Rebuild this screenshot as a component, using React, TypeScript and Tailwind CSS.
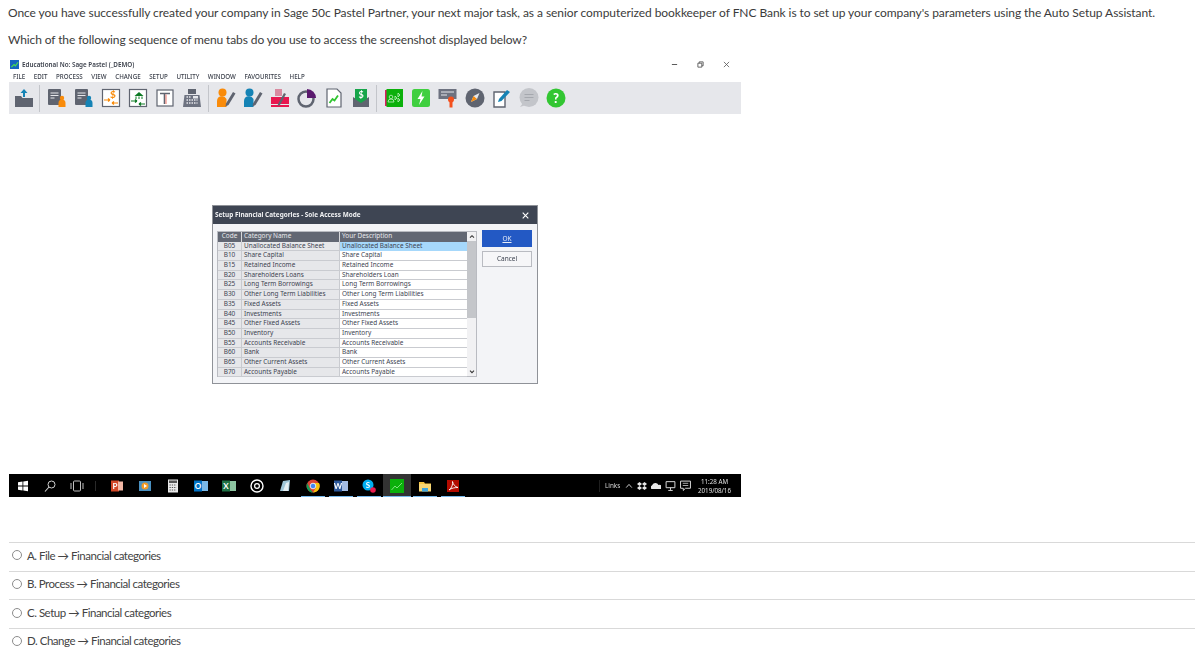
const rows = [
  ['B05', 'Unallocated Balance Sheet', 'Unallocated Balance Sheet'],
  ['B10', 'Share Capital', 'Share Capital'],
  ['B15', 'Retained Income', 'Retained Income'],
  ['B20', 'Shareholders Loans', 'Shareholders Loan'],
  ['B25', 'Long Term Borrowings', 'Long Term Borrowings'],
  ['B30', 'Other Long Term Liabilities', 'Other Long Term Liabilities'],
  ['B35', 'Fixed Assets', 'Fixed Assets'],
  ['B40', 'Investments', 'Investments'],
  ['B45', 'Other Fixed Assets', 'Other Fixed Assets'],
  ['B50', 'Inventory', 'Inventory'],
  ['B55', 'Accounts Receivable', 'Accounts Receivable'],
  ['B60', 'Bank', 'Bank'],
  ['B65', 'Other Current Assets', 'Other Current Assets'],
  ['B70', 'Accounts Payable', 'Accounts Payable'],
];

const menus = ['FILE', 'EDIT', 'PROCESS', 'VIEW', 'CHANGE', 'SETUP', 'UTILITY', 'WINDOW', 'FAVOURITES', 'HELP'];

const options = ['A. File', 'B. Process', 'C. Setup', 'D. Change'];

function Icon({ children }: { children: React.ReactNode }) {
  return (
    <div className="w-[27px] flex justify-center shrink-0">
      <svg viewBox="0 0 20 20" className="w-[20px] h-[20px]">
        {children}
      </svg>
    </div>
  );
}

function Sep() {
  return <div className="w-px h-[27px] bg-[#c3c5ca] shrink-0" />;
}

function DocPerson({ color }: { color: string }) {
  return (
    <>
      <rect x="1" y="1" width="13" height="16" rx="1" fill="#5f6470" />
      <path d="M3.500 5h8M3.500 7.500h8M3.500 10h4" stroke="#e6e7eb" strokeWidth="1" />
      <circle cx="15" cy="10" r="2.200" fill={color} />
      <path d="M11.500 19v-4a3.500 3.500 0 0 1 7 0v4z" fill={color} />
    </>
  );
}

function Person({ color }: { color: string }) {
  return (
    <>
      <circle cx="6.500" cy="4.500" r="4" fill={color} />
      <path d="M1 19v-6a5 5 0 0 1 9.500-2v8z" fill={color} />
      <path d="M10 15.500L17 4l2.500 1.500-7 11.500-3 1.500z" fill="#5f6470" />
    </>
  );
}

function Toolbar() {
  return (
    <div className="h-[32px] bg-[#e6e7eb] flex items-center pl-[1px]">
      <Icon>
        <path d="M1 8h6l1.500 2H19v9H1z" fill="#5f6470" />
        <path d="M10 1l3.500 4H11v4H9V5H6.500z" fill="#1583b5" />
      </Icon>
      <div className="w-[2px]" />
      <Sep />
      <div className="w-[3px]" />
      <Icon><DocPerson color="#f98b0a" /></Icon>
      <Icon><DocPerson color="#1583b5" /></Icon>
      <Icon>
        <rect x="1.500" y="1.500" width="17" height="17" fill="#fff" stroke="#5f6470" strokeWidth="1.200" />
        <text x="12" y="10" fontSize="10" fontWeight="700" fill="#f98b0a" textAnchor="middle" fontFamily="Lato, sans-serif">$</text>
        <path d="M3 12h6M9 12l-2-1.500M9 12l-2 1.500" stroke="#f98b0a" strokeWidth="1.200" fill="none" />
        <path d="M17 15h-6M11 15l2-1.500M11 15l2 1.500" stroke="#f98b0a" strokeWidth="1.200" fill="none" />
      </Icon>
      <Icon>
        <rect x="1.500" y="1.500" width="17" height="17" fill="#fff" stroke="#5f6470" strokeWidth="1.200" />
        <path d="M6.500 8L11 4l4.500 4z" fill="#0d7a24" />
        <path d="M8 8.500v2.500M11 8.500v2.500M14 8.500v2.500" stroke="#0d7a24" strokeWidth="1" />
        <path d="M3 13h6M9 13l-2-1.500M9 13l-2 1.500M17 16h-6M11 16l2-1.500M11 16l2 1.500" stroke="#0d7a24" strokeWidth="1.200" fill="none" />
      </Icon>
      <Icon>
        <rect x="2" y="2" width="16" height="16" fill="#fff" stroke="#5f6470" strokeWidth="1.200" />
        <path d="M5 5.500h10M9.500 5.500v10.500" stroke="#5f6470" strokeWidth="1.600" />
        <path d="M11 6.500v9.500" stroke="#ef8a80" strokeWidth="1.200" />
      </Icon>
      <Icon>
        <rect x="6" y="1" width="8" height="5" fill="#5f6470" />
        <path d="M1 19l1.500-12h15l1.500 12z" fill="#6d7280" />
        <rect x="11" y="8" width="5" height="2.500" fill="#e6e7eb" />
        <path d="M4.500 9h5M4.500 12h11M4.500 15h11" stroke="#e6e7eb" strokeWidth="1.300" strokeDasharray="1.500 1" />
      </Icon>
      <div className="w-[3px]" />
      <Sep />
      <div className="w-[3px]" />
      <Icon><Person color="#f98b0a" /></Icon>
      <Icon><Person color="#1583b5" /></Icon>
      <Icon>
        <rect x="5" y="1" width="7" height="7" fill="#d98aa0" />
        <rect x="1" y="9" width="18" height="7" fill="#e8174f" />
        <rect x="1" y="17" width="18" height="2" fill="#e8174f" />
        <path d="M8 16l6-11 2 1-6 11-2.500 1z" fill="#5f6470" />
      </Icon>
      <Icon>
        <circle cx="9" cy="11" r="7.500" fill="none" stroke="#5f6470" strokeWidth="2.500" />
        <path d="M10 1a9 9 0 0 1 9 9h-9z" fill="#5b1a6e" />
      </Icon>
      <Icon>
        <path d="M3 1h10l4 4v14H3z" fill="#fff" stroke="#5f6470" strokeWidth="1.200" />
        <path d="M5.500 15l3-4 2 1.500 3.500-5" fill="none" stroke="#2fc52f" strokeWidth="1.800" />
      </Icon>
      <Icon>
        <path d="M2 9l8 5 8-5v10H2z" fill="#5f6470" />
        <path d="M4 1h12v10l-6 4-6-4z" fill="#17a54a" />
        <text x="10" y="10" fontSize="9" fontWeight="700" fill="#fff" textAnchor="middle" fontFamily="Lato, sans-serif">$</text>
      </Icon>
      <div className="w-[2px]" />
      <Sep />
      <div className="w-[3px]" />
      <Icon>
        <rect x="1" y="2" width="3" height="16" fill="#d81b60" />
        <rect x="2.500" y="1" width="16.500" height="18" fill="#0bb00b" />
        <circle cx="7" cy="9" r="1.800" fill="none" stroke="#bff0bf" strokeWidth="0.800" />
        <path d="M4 14a3 3 0 0 1 6 0z" fill="none" stroke="#bff0bf" strokeWidth="0.800" />
        <path d="M14 5l2 2-2 2zM14 10l2 2-2 2zM11 8l2 2-2 2z" fill="none" stroke="#bff0bf" strokeWidth="0.800" />
      </Icon>
      <Icon>
        <rect x="1" y="1" width="18" height="18" rx="2.500" fill="#3fcf3f" />
        <path d="M11.500 3l-5 8h3l-1.500 6 5.500-8.500h-3z" fill="#fff" />
      </Icon>
      <Icon>
        <rect x="0.500" y="1" width="18" height="10" fill="#6d7280" />
        <path d="M3 4h13" stroke="#e6e7eb" strokeWidth="1" />
        <path d="M3 7h6" stroke="#e6e7eb" strokeWidth="1" />
        <circle cx="13" cy="11.500" r="3" fill="#f4511e" />
        <path d="M11.500 14h3v5.500h-3z" fill="#f4511e" />
      </Icon>
      <Icon>
        <circle cx="10" cy="10" r="9.500" fill="#5f6470" />
        <path d="M6 14l2.500-6 6-3-2.500 6z" fill="#e6e7eb" />
        <path d="M6 14l2.500-6 3.500 3z" fill="#f98b0a" />
      </Icon>
      <Icon>
        <path d="M2 4h11v15H2z" fill="#fff" stroke="#5f6470" strokeWidth="1.400" />
        <path d="M6 14l1-3 8-9 3 2-8.500 9z" fill="#1583b5" />
      </Icon>
      <Icon>
        <circle cx="10" cy="9.500" r="9.500" fill="#c3c5ca" />
        <path d="M1 19l3-4 3 2z" fill="#c3c5ca" />
        <path d="M5.500 6.500h9M5.500 9.500h9M5.500 12.500h5" stroke="#a5a8ae" strokeWidth="1.200" />
      </Icon>
      <Icon>
        <circle cx="10" cy="10" r="9.500" fill="#32c632" />
        <text x="10" y="14.500" fontSize="13" fontWeight="900" fill="#fff" textAnchor="middle" fontFamily="Lato, sans-serif">?</text>
      </Icon>
    </div>
  );
}

function Dialog() {
  return (
    <div className="w-[326px] h-[179px] ml-[203px] mt-[91px] border border-[#8f9298] bg-[#f3f4f7] font-['Noto_Sans',sans-serif]">
      <div className="h-[18px] bg-[#3e4553] flex items-center justify-between pl-[2px] pr-[8px] text-white">
        <span className="text-[6.400px] font-bold text-[#f0f1f3] whitespace-nowrap">
          Setup Financial Categories - Sole Access Mode
        </span>
        <svg viewBox="0 0 10 10" className="w-[7px] h-[7px]">
          <path d="M1 1l8 8M9 1l-8 8" stroke="#fff" strokeWidth="1.600" />
        </svg>
      </div>
      <div className="flex pt-[7px] pl-[4px]">
        <div className="w-[260px] h-[146px] flex border border-[#b9bbc1] bg-white">
          <div className="w-[249px] shrink-0 text-[6.450px] leading-[8px] text-[#3d4350]">
            <div className="flex h-[9.700px] bg-[#626773] text-[#e8e9ec]">
              <div className="w-[24px] text-center border-r border-[#d6d7db]">Code</div>
              <div className="w-[98px] pl-[2px] border-r border-[#d6d7db]">Category Name</div>
              <div className="flex-1 pl-[2px]">Your Description</div>
            </div>
            {rows.map((row, i) => (
              <div key={row[0]} className="flex h-[9.700px]">
                <div className="w-[24px] text-center bg-[#e6e7ea] border-r border-b border-[#c9cbd0] whitespace-nowrap">{row[0]}</div>
                <div className="w-[98px] pl-[2px] bg-[#e6e7ea] border-r border-b border-[#c9cbd0] whitespace-nowrap">{row[1]}</div>
                <div className={i === 0 ? 'flex-1 pl-[2px] bg-[#a6d8fb] whitespace-nowrap' : 'flex-1 pl-[2px] bg-white border-b border-[#c9cbd0] whitespace-nowrap'}>{row[2]}</div>
              </div>
            ))}
          </div>
          <div className="w-[9px] ml-auto flex flex-col items-center bg-[#f1f1f3]">
            <svg viewBox="0 0 10 10" className="w-[8px] h-[9px] shrink-0">
              <path d="M2.500 6.500L5 4l2.500 2.500" fill="none" stroke="#333" strokeWidth="1.300" />
            </svg>
            <div className="w-full h-[77px] bg-[#c4c6ca]" />
            <svg viewBox="0 0 10 10" className="w-[8px] h-[9px] shrink-0 mt-auto">
              <path d="M2.500 4L5 6.500 7.500 4" fill="none" stroke="#333" strokeWidth="1.300" />
            </svg>
          </div>
        </div>
        <div className="flex flex-col gap-[4px] ml-[5px] w-[50px] -mt-[1px]">
          <div className="h-[17px] bg-[#2359c4] text-[#e8edf8] text-[6.500px] flex items-center justify-center underline">OK</div>
          <div className="h-[16px] bg-[#f6f6f8] border border-[#b9bbc1] text-[#3d4350] text-[6.500px] flex items-center justify-center">Cancel</div>
        </div>
      </div>
    </div>
  );
}

function TaskIcon({ active, narrow, children }: { active?: boolean; narrow?: boolean; children: React.ReactNode }) {
  return (
    <div className={narrow ? 'w-[27px] h-full flex items-center justify-center shrink-0 relative' : 'w-[28px] h-full flex items-center justify-center shrink-0 relative'}>
      <svg viewBox="0 0 14 14" className="w-[14px] h-[14px]">
        {children}
      </svg>
      {active && <div className="absolute bottom-0 left-[2px] right-[2px] h-[1.500px] bg-[#76b9ed]" />}
    </div>
  );
}

function Taskbar() {
  return (
    <div className="h-[23px] bg-black flex items-center mt-[90px] font-['Noto_Sans',sans-serif]">
      <TaskIcon narrow>
        <path d="M2 3.200l4.500-.6v4H2zM7.300 2.500l4.700-.7v4.800H7.300zM2 7.400h4.500v4l-4.500-.6zM7.300 7.400H12v4.800l-4.700-.7z" fill="#fff" />
      </TaskIcon>
      <TaskIcon narrow>
        <circle cx="8.500" cy="5.500" r="3.500" fill="none" stroke="#d0d0d0" strokeWidth="1" />
        <path d="M6 8l-4 4.500" stroke="#d0d0d0" strokeWidth="1.100" />
      </TaskIcon>
      <TaskIcon narrow>
        <rect x="3.500" y="2" width="7" height="10" rx="1" fill="none" stroke="#c0c0c0" strokeWidth="1" />
        <path d="M1 4v6M13 4v6" stroke="#c0c0c0" strokeWidth="1" />
      </TaskIcon>
      <div className="w-px h-[10px] bg-[#2a2a2a] ml-[5px] mr-[7px] shrink-0" />
      <TaskIcon>
        <rect x="1" y="1.500" width="8" height="11" fill="#d24726" />
        <rect x="8" y="2.500" width="5" height="9" fill="#f3b8a5" />
        <text x="5" y="10" fontSize="8" fontWeight="700" fill="#fff" textAnchor="middle" fontFamily="Lato, sans-serif">P</text>
      </TaskIcon>
      <TaskIcon>
        <rect x="1" y="2" width="12" height="10" fill="#4a90c0" />
        <circle cx="7" cy="7" r="3.500" fill="#f59a23" />
        <path d="M6 5l3 2-3 2z" fill="#fff" />
      </TaskIcon>
      <TaskIcon>
        <rect x="2" y="0.500" width="10" height="13" fill="#e8e8e8" />
        <rect x="3" y="1.500" width="8" height="2.500" fill="#555" />
        <path d="M3.500 6h7M3.500 8.500h7M3.500 11h7" stroke="#555" strokeWidth="1.200" strokeDasharray="1.300 1" />
      </TaskIcon>
      <TaskIcon>
        <rect x="5" y="2" width="9" height="10" fill="#7ab8e8" />
        <rect x="0" y="1.500" width="8" height="11" fill="#0072c6" />
        <text x="4" y="10" fontSize="8" fontWeight="700" fill="#fff" textAnchor="middle" fontFamily="Lato, sans-serif">O</text>
      </TaskIcon>
      <TaskIcon>
        <rect x="6" y="2" width="8" height="10" fill="#8cc3a0" />
        <rect x="0" y="1.500" width="8" height="11" fill="#1e7145" />
        <text x="4" y="10" fontSize="8" fontWeight="700" fill="#fff" textAnchor="middle" fontFamily="Lato, sans-serif">X</text>
      </TaskIcon>
      <TaskIcon>
        <circle cx="7" cy="7" r="6" fill="none" stroke="#fff" strokeWidth="1.400" />
        <circle cx="7" cy="7" r="2.400" fill="none" stroke="#fff" strokeWidth="1.200" />
      </TaskIcon>
      <TaskIcon>
        <path d="M2 12l3-10 7-1-1 11z" fill="#9fc6d8" />
        <path d="M5 12l3-8 3-1-1 9z" fill="#e4eef2" />
      </TaskIcon>
      <TaskIcon active>
        <circle cx="7" cy="7" r="6.500" fill="#db4437" />
        <path d="M1.300 4L4 10l3 3.500A6.500 6.500 0 0 1 1.300 4z" fill="#0f9d58" />
        <path d="M7 4h6a6.500 6.500 0 0 1-6 9.500l3-5z" fill="#f4c20d" />
        <circle cx="7" cy="7" r="2.800" fill="#4285f4" stroke="#fff" strokeWidth="0.800" />
      </TaskIcon>
      <TaskIcon active>
        <rect x="5" y="2" width="9" height="10" fill="#a3bce4" />
        <rect x="0" y="1.500" width="8" height="11" fill="#2b579a" />
        <text x="4" y="10" fontSize="8" fontWeight="700" fill="#fff" textAnchor="middle" fontFamily="Lato, sans-serif">W</text>
      </TaskIcon>
      <TaskIcon active>
        <circle cx="6" cy="6" r="5.500" fill="#00aff0" />
        <text x="6" y="9" fontSize="8" fontWeight="700" fill="#fff" textAnchor="middle" fontFamily="Lato, sans-serif">S</text>
        <circle cx="11" cy="11" r="2.800" fill="#e81c4f" />
      </TaskIcon>
      <div className="w-[28px] h-full bg-[#333] flex items-center justify-center shrink-0 relative">
        <svg viewBox="0 0 14 14" className="w-[14px] h-[14px]">
          <rect x="0" y="0" width="14" height="14" fill="#0bb00b" />
          <path d="M1.500 11l3.500-4 2 2 5-5" fill="none" stroke="#7fe07f" strokeWidth="1" />
        </svg>
        <div className="absolute bottom-0 left-0 right-0 h-[1.500px] bg-[#76b9ed]" />
      </div>
      <TaskIcon active>
        <path d="M1 3h5l1 1.500h6V5H1z" fill="#f5c542" />
        <rect x="1" y="5" width="12" height="7.500" fill="#f8d775" />
        <rect x="4" y="9" width="6" height="3.500" fill="#3fa7e0" />
      </TaskIcon>
      <TaskIcon active>
        <rect x="1" y="1" width="12" height="12" fill="#b30b00" />
        <path d="M3 11c3-2 4-6 3.500-8.500C7 5 9 8 12 8.500 9 8.500 5.500 9 3 11z" fill="none" stroke="#fff" strokeWidth="0.900" />
      </TaskIcon>
      <div className="flex-1" />
      <div className="w-px h-[12px] bg-[#1f1f1f] mr-[5px]" />
      <span className="text-[6.300px] text-[#d8d8d8] w-[20px] whitespace-nowrap">Links</span>
      <svg viewBox="0 0 10 10" className="w-[8px] h-[8px] mr-[4px]">
        <path d="M1.500 7L5 3l3.500 4" fill="none" stroke="#e0e0e0" strokeWidth="1.100" />
      </svg>
      <svg viewBox="0 0 10 10" className="w-[10px] h-[10px] mr-[4px]">
        <path d="M2.500 1L5 3 2.500 5 0 3zM7.500 1L10 3 7.500 5 5 3zM2.500 5L5 7 2.500 9 0 7zM7.500 5L10 7 7.500 9 5 7z" fill="#e8e8e8" />
      </svg>
      <svg viewBox="0 0 10 10" className="w-[10px] h-[10px] mr-[4px]">
        <path d="M0.500 8a2 2 0 0 1 .5-3.500A3.500 3.500 0 0 1 7.500 4 2.200 2.200 0 0 1 9.500 8z" fill="#e8e8e8" />
      </svg>
      <svg viewBox="0 0 10 10" className="w-[11px] h-[11px] mr-[4px]">
        <path d="M1 1.500h8v5.500H1zM5 7v2M3 9.500h4" fill="none" stroke="#d8d8d8" strokeWidth="0.900" />
      </svg>
      <svg viewBox="0 0 10 10" className="w-[11px] h-[11px] mr-[5px]">
        <path d="M0.500 1h9v6.500H5L3 9.500v-2H0.500z" fill="none" stroke="#d8d8d8" strokeWidth="0.900" />
        <path d="M2.500 3h5M2.500 5h5" stroke="#d8d8d8" strokeWidth="0.700" />
      </svg>
      <div className="w-[37px] text-[6.200px] leading-[9px] text-[#e0e0e0] text-center whitespace-nowrap">
        <div>11:28 AM</div>
        <div>2019/08/16</div>
      </div>
      <div className="w-[8px]" />
    </div>
  );
}

export default function App() {
  return (
    <div className="min-h-screen bg-white font-['Lato',sans-serif] text-[#3b3b3b] overflow-hidden">
      <div className="pl-[8px] pt-[5px]">
        <p className="text-[12px] tracking-[-0.065px] leading-[16px] whitespace-nowrap">
          Once you have successfully created your company in Sage 50c Pastel Partner, your next major task, as a senior computerized bookkeeper of FNC Bank is to set up your company's parameters using the Auto Setup Assistant.
        </p>
        <p className="text-[12px] tracking-[-0.11px] leading-[16px] mt-[11px] whitespace-nowrap">
          Which of the following sequence of menu tabs do you use to access the screenshot displayed below?
        </p>
      </div>

      <div className="w-[732px] ml-[9px] mt-[9px] blur-[0.4px]">
        <div className="h-[25px] font-['Noto_Sans',sans-serif] text-[#3a3f4a]">
          <div className="h-[14px] pt-[1px] flex items-center">
            <svg viewBox="0 0 10 10" className="w-[9px] h-[9px] ml-[1px] mr-[3px]">
              <rect width="10" height="10" fill="#1565c0" />
              <path d="M1.500 8l3-3 1.500 1.500L9 2.500" fill="none" stroke="#4ade4a" strokeWidth="1.300" />
            </svg>
            <span className="text-[6.300px] whitespace-nowrap font-semibold">Educational No: Sage Pastel (_DEMO)</span>
            <div className="ml-auto flex items-center gap-[19px] pr-[11px]">
              <svg viewBox="0 0 8 8" className="w-[7px] h-[7px]"><path d="M1 4h6" stroke="#555" strokeWidth="1.100" /></svg>
              <svg viewBox="0 0 8 8" className="w-[7px] h-[7px]"><path d="M1 2.500h4.500V7H1zM2.500 2.500V1H7v4.500H5.500" fill="none" stroke="#555" strokeWidth="1" /></svg>
              <svg viewBox="0 0 8 8" className="w-[7px] h-[7px]"><path d="M1 1l6 6M7 1L1 7" stroke="#555" strokeWidth="0.900" /></svg>
            </div>
          </div>
          <div className="flex gap-[8.600px] pl-[4px] text-[6.200px] leading-[11px] font-medium whitespace-nowrap">
            {menus.map((menu) => (
              <span key={menu}>{menu}</span>
            ))}
          </div>
        </div>
        <Toolbar />
        <Dialog />
        <Taskbar />
      </div>

      <div className="ml-[9px] mt-[45px] text-[#444] text-[11.500px]">
        {options.map((option, i) => (
          <div key={option} className={i === 3 ? 'h-[28px] border-t border-[#d9d9d9] flex items-center pl-[3px] pb-[3px]' : 'h-[28.700px] border-t border-[#d9d9d9] flex items-center pl-[3px] pb-[3px]'}>
            <span className="w-[10px] h-[10px] rounded-full border border-[#8c8c8c] mr-[5px] bg-white shrink-0" />
            <span className="tracking-[-0.48px] whitespace-nowrap">{option} → Financial categories</span>
          </div>
        ))}
      </div>
    </div>
  );
}
